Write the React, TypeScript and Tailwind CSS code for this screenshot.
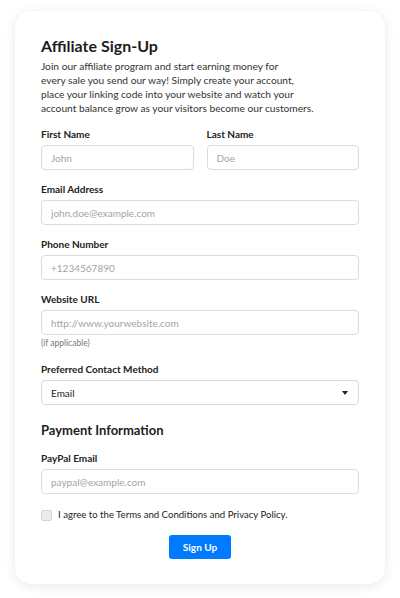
import { useState } from 'react';

interface FieldProps {
  label: string;
  placeholder: string;
  type?: string;
}

function Field({ label, placeholder, type = 'text' }: FieldProps) {
  return (
    <div className="flex flex-col">
      <label className="text-[10px] leading-[14px] font-bold text-[#222]">{label}</label>
      <input
        type={type}
        placeholder={placeholder}
        className="mt-[4px] h-[25px] w-full rounded-[4px] border border-[#dcdcdc] bg-white px-[9px] text-[10px] text-[#333] placeholder:text-[#a3a3a3] outline-none"
      />
    </div>
  );
}

export default function App() {
  const [agree, setAgree] = useState(false);

  return (
    <div className="min-h-[598px] bg-white pt-[11px] pb-[15px] font-['Lato','Noto_Sans',sans-serif]">
      <div className="mx-[15px] rounded-[16px] bg-white px-[26px] pt-[24px] pb-[25px] shadow-[0_2px_12px_rgba(0,0,0,0.09)]">
        {/* header */}
        <h1 className="text-[16px] leading-[21px] font-bold text-[#1d1d1d]">Affiliate Sign-Up</h1>
        <p className="mt-[3px] text-[10.2px] leading-[14px] text-[#333]">
          <span className="block whitespace-nowrap">Join our affiliate program and start earning money for</span>
          <span className="block whitespace-nowrap">every sale you send our way! Simply create your account,</span>
          <span className="block whitespace-nowrap">place your linking code into your website and watch your</span>
          <span className="block whitespace-nowrap">account balance grow as your visitors become our customers.</span>
        </p>

        <div className="mt-[12px] grid grid-cols-2 gap-x-[13px]">
          <Field label="First Name" placeholder="John" />
          <Field label="Last Name" placeholder="Doe" />
        </div>

        <div className="mt-[12px]">
          <Field label="Email Address" placeholder="john.doe@example.com" type="email" />
        </div>
        <div className="mt-[12px]">
          <Field label="Phone Number" placeholder="+1234567890" type="tel" />
        </div>
        <div className="mt-[12px]">
          <Field label="Website URL" placeholder="http://www.yourwebsite.com" type="url" />
          <p className="mt-[3px] text-[8.5px] leading-[10px] text-[#777]">(if applicable)</p>
        </div>

        <div className="mt-[14px] flex flex-col">
          <label className="text-[10px] leading-[14px] font-bold text-[#222]">Preferred Contact Method</label>
          <div className="relative mt-[4px]">
            <select className="block h-[25px] w-full appearance-none rounded-[4px] border border-[#dcdcdc] bg-white px-[9px] text-[10px] leading-[14px] text-[#222] outline-none">
              <option>Email</option>
              <option>Phone</option>
            </select>
            <svg className="pointer-events-none absolute right-[11px] top-[11px]" width="6" height="4" viewBox="0 0 6 4">
              <path d="M0 0h6L3 4z" fill="#222" />
            </svg>
          </div>
        </div>

        <h2 className="mt-[16px] text-[13px] leading-[18px] font-bold text-[#1d1d1d]">Payment Information</h2>

        <div className="mt-[12px]">
          <Field label="PayPal Email" placeholder="paypal@example.com" type="email" />
        </div>

        <label className="mt-[14px] flex items-center gap-[6px] text-[9.6px] leading-[14px] text-[#222]">
          <input
            type="checkbox"
            checked={agree}
            onChange={() => setAgree(!agree)}
            className="h-[11px] w-[11px] appearance-none rounded-[2px] border border-[#d4d4d4] bg-[#ececec]"
          />
          I agree to the Terms and Conditions and Privacy Policy.
        </label>

        <div className="mt-[13px] flex justify-center">
          <button className="h-[24px] w-[62px] rounded-[3px] bg-[#007bff] text-[10px] font-bold text-white">
            Sign Up
          </button>
        </div>
      </div>
    </div>
  );
}
